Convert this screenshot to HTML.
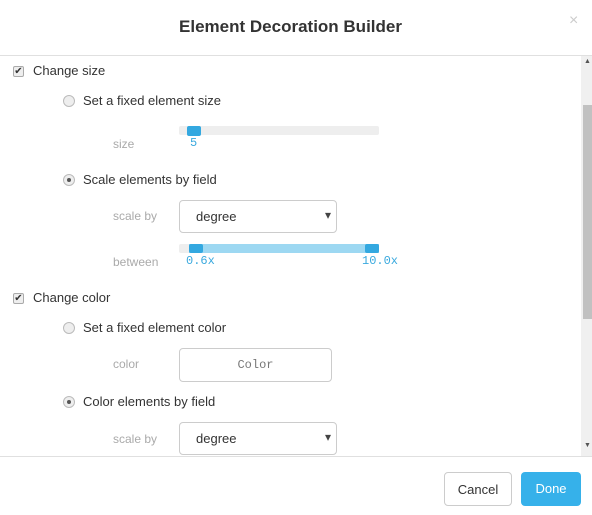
<!DOCTYPE html>
<html><head><style>
*{margin:0;padding:0;box-sizing:border-box}
body{width:592px;height:515px;background:#fff;font-family:"Liberation Sans",sans-serif;position:relative;overflow:hidden;color:#333}
.a{position:absolute}
.t{font-size:13px;color:#333;white-space:nowrap}
.l{font-size:12px;color:#aaa}
.cb{width:11px;height:11px;border:1px solid #aaa;border-radius:2px;background:#eee;font-size:10px;line-height:9px;text-align:center;color:#333}
.rd{width:12px;height:12px;border:1px solid #bbb;border-radius:50%;background:#eee}
.rd.on::after{content:"";position:absolute;left:3px;top:3px;width:4px;height:4px;border-radius:50%;background:#555}
.sel{border:1px solid #ccc;border-radius:4px;height:33px;width:158px;font-size:13px;color:#333;padding:8px 0 0 16px}
.sel::after{content:"▾";position:absolute;right:5px;top:7px;font-size:12px;color:#444}
.mono{font-family:"Liberation Mono",monospace;font-size:12px;color:#3aa9de}
.track{height:9px;background:#eee;border-radius:2px}
.knob{width:14px;height:10px;background:#33a8e0;border-radius:2px}
</style></head><body>
<div class="a" style="left:0;top:17px;width:581px;text-align:center;font-size:17px;font-weight:bold;color:#333">Element Decoration Builder</div>
<div class="a" style="left:569px;top:12px;font-size:16px;color:#ccc">×</div>
<div class="a" style="left:0;top:55px;width:592px;height:1px;background:#e0e0e0"></div>
<div class="a" style="left:0;top:456px;width:592px;height:1px;background:#e0e0e0"></div>
<div class="a" style="left:581px;top:56px;width:11px;height:400px;background:#f0f0f0"></div>
<div class="a" style="left:583px;top:105px;width:9px;height:214px;background:#c1c1c1"></div>
<div class="a" style="left:584px;top:58px;font-size:7px;color:#555">▲</div>
<div class="a" style="left:584px;top:442px;font-size:7px;color:#555">▼</div>

<div class="a cb" style="left:13px;top:66px">✔</div>
<div class="a t" style="left:33px;top:63px">Change size</div>
<div class="a rd" style="left:63px;top:95px"></div>
<div class="a t" style="left:83px;top:93px">Set a fixed element size</div>
<div class="a track" style="left:179px;top:126px;width:200px"></div>
<div class="a knob" style="left:187px;top:126px"></div>
<div class="a mono" style="left:190px;top:136px">5</div>
<div class="a l" style="left:113px;top:137px">size</div>
<div class="a rd on" style="left:63px;top:174px"></div>
<div class="a t" style="left:83px;top:172px">Scale elements by field</div>
<div class="a l" style="left:113px;top:209px">scale by</div>
<div class="a sel" style="left:179px;top:200px">degree</div>
<div class="a track" style="left:179px;top:244px;width:200px"></div>
<div class="a" style="left:189px;top:244px;width:190px;height:9px;background:#9dd8f2"></div>
<div class="a knob" style="left:189px;top:244px;height:9px"></div>
<div class="a knob" style="left:365px;top:244px;height:9px"></div>
<div class="a l" style="left:113px;top:255px">between</div>
<div class="a mono" style="left:186px;top:254px">0.6x</div>
<div class="a mono" style="left:362px;top:254px">10.0x</div>

<div class="a cb" style="left:13px;top:293px">✔</div>
<div class="a t" style="left:33px;top:290px">Change color</div>
<div class="a rd" style="left:63px;top:322px"></div>
<div class="a t" style="left:83px;top:320px">Set a fixed element color</div>
<div class="a l" style="left:113px;top:357px">color</div>
<div class="a" style="left:179px;top:348px;width:153px;height:34px;border:1px solid #ccc;border-radius:4px;text-align:center;padding-top:9px;font-family:'Liberation Mono',monospace;font-size:12px;color:#777">Color</div>
<div class="a rd on" style="left:63px;top:396px"></div>
<div class="a t" style="left:83px;top:394px">Color elements by field</div>
<div class="a l" style="left:113px;top:432px">scale by</div>
<div class="a sel" style="left:179px;top:422px">degree</div>

<div class="a" style="left:444px;top:472px;width:68px;height:34px;border:1px solid #ccc;border-radius:4px;text-align:center;padding-top:9px;font-size:13px;color:#333">Cancel</div>
<div class="a" style="left:521px;top:472px;width:60px;height:34px;background:#36b1ea;border-radius:4px;text-align:center;padding-top:9px;font-size:13px;color:#fff">Done</div>
</body></html>
